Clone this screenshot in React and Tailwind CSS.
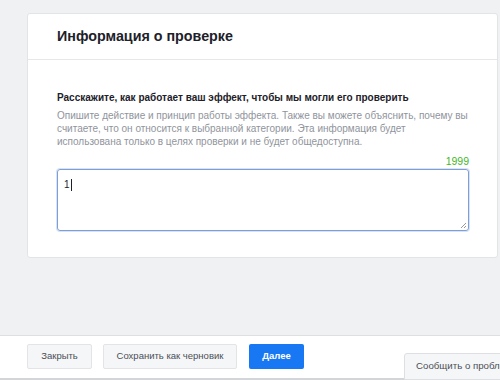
export default function App() {
  const font = { fontFamily: '"Liberation Sans", Arial, sans-serif' };
  return (
    <div className="w-[500px] h-[380px] overflow-hidden bg-[#f0f1f3] flex flex-col relative" style={font}>
      <div className="flex-1 pl-[27px] pt-[13px]">
        <div className="w-[471px] h-[245px] bg-white border border-[#e3e4e6] rounded-[3px] flex flex-col">
          <div className="h-[46px] border-b border-[#e6e7e9] flex items-center pl-[29px]">
            <h1 className="text-[14.3px] font-bold text-[#1d2129]">Информация о проверке</h1>
          </div>
          <div className="pl-[29px] pr-[28px] pt-[31px]">
            <div className="text-[10px] font-bold text-[#1d2129] leading-[13px]">
              Расскажите, как работает ваш эффект, чтобы мы могли его проверить
            </div>
            <p className="whitespace-nowrap text-[10px] text-[#90949c] leading-[13px] mt-[5px]">
              Опишите действие и принцип работы эффекта. Также вы можете объяснить, почему вы<br />
              считаете, что он относится к выбранной категории. Эта информация будет<br />
              использована только в целях проверки и не будет общедоступна.
            </p>
            <div className="text-right text-[10.5px] text-[#42b72a] leading-[14px] mt-[6px]">1999</div>
            <div className="h-[62px] mt-[1px] border border-[#7f9fd3] rounded-[3px] shadow-[0_0_0_1px_#d6e2f5] px-[6px] py-[7px] text-[10px] text-[#1d2129] relative">
              1<span className="inline-block w-[1px] h-[12px] bg-[#1d2129] align-middle ml-[1px]"></span>
              <svg className="absolute right-[1px] bottom-[1px]" width="7" height="7" viewBox="0 0 7 7">
                <path d="M6 1L1 6M6 4L4 6" stroke="#9a9a9a" strokeWidth="1" />
              </svg>
            </div>
          </div>
        </div>
      </div>
      <div className="h-[45px] bg-white border-t border-[#dddfe2] border-b-2 border-b-[#d3d5d9] flex items-start pt-[8px] pl-[27px] gap-[11px] text-[9.5px]">
        <button className="h-[25px] w-[65px] bg-[#f5f6f7] border border-[#e3e4e6] rounded-[2px] text-[#4b4f56]">Закрыть</button>
        <button className="h-[25px] w-[134px] bg-[#f5f6f7] border border-[#e3e4e6] rounded-[2px] text-[#4b4f56]">Сохранить как черновик</button>
        <button className="h-[25px] w-[55px] ml-[1px] bg-[#1877f2] rounded-[2px] text-white font-bold">Далее</button>
      </div>
      <div className="absolute left-[404px] top-[353px] h-[27px] w-[110px] bg-[#f5f6f7] border border-[#dddfe2] rounded-tl-[3px] text-[9.7px] text-[#4b4f56] flex items-center pl-[11px] whitespace-nowrap">
        Сообщить о проблеме
      </div>
    </div>
  );
}
